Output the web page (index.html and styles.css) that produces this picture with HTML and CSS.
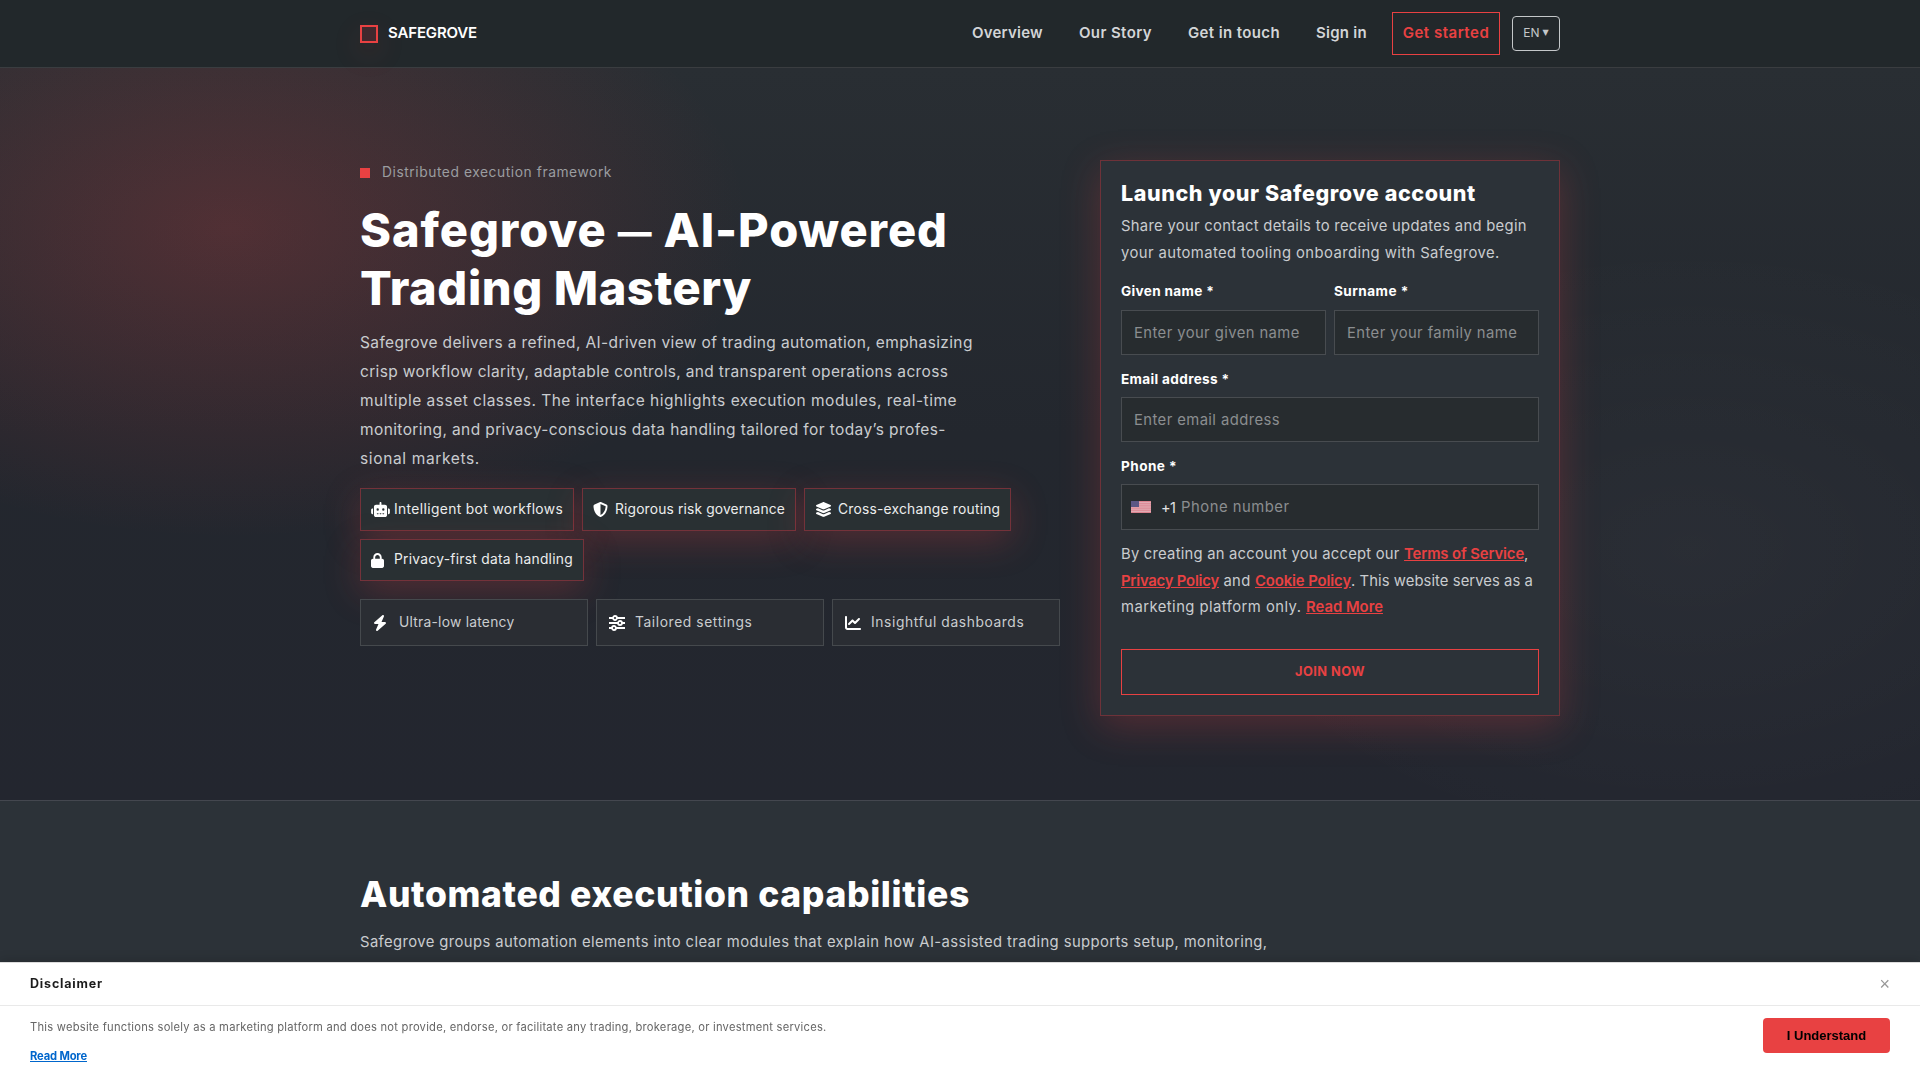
FILE: index.html
```
<!DOCTYPE html>
<html lang="en">
<head>
  <meta charset="UTF-8">
  <title>Safegrove</title>
  <link rel="stylesheet" href="styles.css">
</head>
<body>
  <header class="header">
    <div class="container header-inner">
      <a class="brand"><i class="brand-mark"></i><span class="t brand-name">SAFEGROVE</span></a>
      <nav class="nav">
        <a><span class="t n1">Overview</span></a>
        <a><span class="t n2">Our Story</span></a>
        <a><span class="t n3">Get in touch</span></a>
        <a><span class="t n4">Sign in</span></a>
        <a class="nav-cta"><span class="t n5">Get started</span></a>
        <button class="lang"><span>EN</span><span class="caret">▼</span></button>
      </nav>
    </div>
  </header>

  <!-- Hero -->
  <section class="hero">
    <div class="container hero-grid">
      <div class="hero-copy">
        <div class="eyebrow"><i></i><span class="t eb">Distributed execution framework</span></div>
        <h1><span class="t h1a">Safegrove <span class="dash">—</span> AI-Powered</span><span class="t h1b">Trading Mastery</span></h1>
        <p class="lead">
          <span class="t p1">Safegrove delivers a refined, AI-driven view of trading automation, emphasizing</span>
          <span class="t p2">crisp workflow clarity, adaptable controls, and transparent operations across</span>
          <span class="t p3">multiple asset classes. The interface highlights execution modules, real-time</span>
          <span class="t p4">monitoring, and privacy-conscious data handling tailored for today’s profes-</span>
          <span class="t p5">sional markets.</span>
        </p>
        <div class="chips">
          <div class="chip chip-bot">
            <svg viewBox="0 0 640 512" width="19" height="15"><path d="M320 0c17.700 0 32 14.300 32 32v64h120c39.800 0 72 32.200 72 72v272c0 39.800-32.200 72-72 72H168c-39.800 0-72-32.200-72-72V168c0-39.800 32.200-72 72-72h120V32c0-17.700 14.300-32 32-32zM208 384c-8.800 0-16 7.200-16 16s7.200 16 16 16h32c8.800 0 16-7.200 16-16s-7.200-16-16-16h-32zm96 0c-8.800 0-16 7.200-16 16s7.200 16 16 16h32c8.800 0 16-7.200 16-16s-7.200-16-16-16h-32zm96 0c-8.800 0-16 7.200-16 16s7.200 16 16 16h32c8.800 0 16-7.200 16-16s-7.200-16-16-16h-32zM264 256a40 40 0 1 0-80 0 40 40 0 1 0 80 0zm152 40a40 40 0 1 0 0-80 40 40 0 1 0 0 80zM48 224h16v192H48c-26.500 0-48-21.500-48-48v-96c0-26.500 21.500-48 48-48zm544 0c26.500 0 48 21.500 48 48v96c0 26.500-21.500 48-48 48h-16V224h16z"/></svg>
            <span class="t c1">Intelligent bot workflows</span>
          </div>
          <div class="chip">
            <svg viewBox="0 0 512 512" width="15" height="15"><path d="M256 0c4.600 0 9.200 1 13.400 2.900L457.700 82.800c22 9.300 38.400 31 38.300 57.200c-.5 99.200-41.300 280.700-213.600 363.200c-16.700 8-36.100 8-52.800 0C57.300 420.700 16.500 239.200 16 140c-.1-26.200 16.300-47.900 38.300-57.200L242.700 2.900C246.800 1 251.400 0 256 0zm0 66.800V444.800C394 378 431.100 230.100 432 141.400L256 66.800z"/></svg>
            <span class="t c2">Rigorous risk governance</span>
          </div>
          <div class="chip chip-layers">
            <svg viewBox="0 0 576 512" width="17" height="15"><path d="M264.500 5.200c14.900-6.900 32.100-6.900 47 0l218.600 101c8.500 3.900 13.900 12.400 13.900 21.800s-5.400 17.900-13.900 21.800l-218.600 101c-14.900 6.900-32.100 6.900-47 0L45.900 149.800C37.400 145.800 32 137.300 32 128s5.400-17.900 13.900-21.800L264.500 5.200zM476.900 209.600l53.200 24.600c8.500 3.900 13.900 12.400 13.900 21.800s-5.400 17.900-13.900 21.800l-218.600 101c-14.900 6.900-32.100 6.900-47 0L45.900 277.800C37.400 273.800 32 265.300 32 256s5.400-17.900 13.900-21.800l53.200-24.600 152 70.200c23.400 10.800 50.400 10.800 73.800 0l152-70.200zm-152 198.200l152-70.200 53.200 24.600c8.500 3.900 13.900 12.400 13.900 21.800s-5.400 17.900-13.900 21.800l-218.600 101c-14.900 6.900-32.100 6.900-47 0L45.900 405.800C37.400 401.800 32 393.300 32 384s5.400-17.900 13.900-21.800l53.200-24.600 152 70.200c23.400 10.800 50.400 10.800 73.800 0z"/></svg>
            <span class="t c3">Cross-exchange routing</span>
          </div>
          <div class="chip chip-lock">
            <svg viewBox="0 0 448 512" width="13" height="15"><path d="M144 144v48H304V144c0-44.200-35.800-80-80-80s-80 35.800-80 80zM80 192V144C80 64.500 144.500 0 224 0s144 64.500 144 144v48h16c35.300 0 64 28.700 64 64V448c0 35.300-28.700 64-64 64H64c-35.300 0-64-28.700-64-64V256c0-35.300 28.700-64 64-64H80z"/></svg>
            <span class="t c4">Privacy-first data handling</span>
          </div>
        </div>
        <div class="metrics">
          <div class="metric metric-bolt">
            <svg viewBox="0 0 448 512" width="14" height="16"><path d="M349.400 44.600c5.900-13.700 1.500-29.700-10.600-38.500s-28.600-8-39.900 1.800l-256 224c-10 8.800-13.600 22.900-8.900 35.300S50.700 288 64 288H175.500L98.600 467.400c-5.900 13.700-1.500 29.700 10.600 38.500s28.600 8 39.900-1.800l256-224c10-8.800 13.600-22.900 8.900-35.300s-16.600-20.700-30-20.700H272.500L349.400 44.600z"/></svg>
            <span class="t m1">Ultra-low latency</span>
          </div>
          <div class="metric">
            <svg viewBox="0 0 16 16" width="16" height="16"><path d="M0 3h3.500M8.500 3H16M0 8h8.500M13.500 8H16M0 13h2.500M7.500 13H16M8 3a2 2 0 1 1-4 0a2 2 0 1 1 4 0zM13 8a2 2 0 1 1-4 0a2 2 0 1 1 4 0zM7 13a2 2 0 1 1-4 0a2 2 0 1 1 4 0z" fill="none" stroke="#fff" stroke-width="1.800"/></svg>
            <span class="t m2">Tailored settings</span>
          </div>
          <div class="metric">
            <svg viewBox="0 0 512 512" width="16" height="16"><path d="M64 64c0-17.700-14.300-32-32-32S0 46.300 0 64V400c0 44.200 35.800 80 80 80H480c17.700 0 32-14.300 32-32s-14.300-32-32-32H80c-8.800 0-16-7.200-16-16V64zm406.600 86.600c12.500-12.500 12.500-32.800 0-45.300s-32.800-12.500-45.300 0L320 210.700l-57.400-57.400c-12.500-12.500-32.800-12.500-45.300 0l-112 112c-12.500 12.500-12.500 32.800 0 45.300s32.800 12.500 45.300 0L240 221.300l57.400 57.400c12.500 12.500 32.800 12.500 45.300 0l128-128z"/></svg>
            <span class="t m3">Insightful dashboards</span>
          </div>
        </div>
      </div>

      <!-- Signup form -->
      <form class="card">
        <h3><span class="t ch">Launch your Safegrove account</span></h3>
        <p class="card-text">
          <span class="t s1">Share your contact details to receive updates and begin</span>
          <span class="t s2">your automated tooling onboarding with Safegrove.</span>
        </p>
        <div class="fields">
          <div class="field"><label><span class="t l1">Given name *</span></label><div class="input"><span class="t ph">Enter your given name</span></div></div>
          <div class="field"><label><span class="t l2">Surname *</span></label><div class="input"><span class="t ph">Enter your family name</span></div></div>
        </div>
        <div class="field"><label><span class="t l1">Email address *</span></label><div class="input"><span class="t ph">Enter email address</span></div></div>
        <div class="field"><label><span class="t l2">Phone *</span></label>
          <div class="input phone">
            <svg class="flag" viewBox="0 0 20 12" width="20" height="12"><path fill="#dc7f8b" d="M0 0h20v12H0z"/><path stroke="#e3b5bd" stroke-width=".9" d="M0 1.400h20M0 3.200h20M0 5.100h20M0 6.900h20M0 8.800h20M0 10.600h20"/><path fill="#5b5784" d="M0 0h8v6H0z"/></svg>
            <span class="code">+1</span><span class="t ph-phone">Phone number</span>
          </div>
        </div>
        <p class="consent">
          <span class="line"><span class="t k1">By creating an account you accept our </span><a class="t k2">Terms of Service</a>,</span>
          <span class="line"><a class="t k3">Privacy Policy</a><span class="t k4"> and </span><a class="t k5">Cookie Policy</a><span class="t k6">. This website serves as a</span></span>
          <span class="line"><span class="t k7">marketing platform only. </span><a class="t k8">Read More</a></span>
        </p>
        <button type="button" class="join">JOIN NOW</button>
      </form>
    </div>
  </section>

  <section class="features">
    <div class="container">
      <h2>Automated execution capabilities</h2>
      <p class="features-text">Safegrove groups automation elements into clear modules that explain how AI-assisted trading supports setup, monitoring,</p>
    </div>
  </section>

  <!-- Disclaimer banner -->
  <div class="banner">
    <div class="banner-head"><span class="t banner-title">Disclaimer</span><span class="close">×</span></div>
    <div class="banner-body">
      <div>
        <p><span class="t banner-text">This website functions solely as a marketing platform and does not provide, endorse, or facilitate any trading, brokerage, or investment services.</span></p>
        <a class="t">Read More</a>
      </div>
      <button class="understand">I Understand</button>
    </div>
  </div>
</body>
</html>
```
FILE: styles.css
```
* { box-sizing: border-box; }
body {
  margin: 0;
  height: 1080px;
  overflow: hidden;
  font-family: Inter, sans-serif;
  background: #23272e;
  color: #c9cccf;
}
h1, h2, h3, p { margin: 0; }
h1, h2, h3 { color: #fff; font-weight: 800; }
svg { display: block; fill: #fff; flex: none; }
.t { display: inline-block; white-space: pre; }
.container { width: 1200px; margin: 0 auto; }

.header {
  height: 68px;
  background: #22282b;
  border-bottom: 1px solid #3a3d40;
}
.header-inner {
  display: flex;
  justify-content: space-between;
  align-items: center;
  height: 67px;
}
.brand { display: flex; align-items: center; gap: 10px; color: #fff; font-size: 15px; font-weight: 600; }
.brand-name { padding-bottom: 2px; letter-spacing: -.15px; }
.brand-mark {
  width: 18px;
  height: 18px;
  border: 2px solid #e84142;
  background: #40292e;
  box-shadow: 0 10px 30px rgba(232, 65, 66, .15);
}
.nav { display: flex; align-items: center; font-size: 15px; font-weight: 600; color: #d3d5d7; }
.nav a { margin-right: 36px; padding-bottom: 2px; }
.nav a:nth-child(4) { margin-right: 25px; }
.n1 { letter-spacing: .24px; }
.n2 { letter-spacing: .39px; }
.n3 { letter-spacing: .38px; }
.n4 { letter-spacing: .27px; }
.n5 { letter-spacing: .5px; }
.nav .nav-cta {
  margin-right: 12px;
  padding: 0;
  height: 43px;
  width: 108px;
  line-height: 39px;
  text-align: center;
  border: 1px solid #e84142;
  color: #e84142;
}
.lang {
  display: flex;
  align-items: center;
  justify-content: center;
  gap: 3px;
  width: 48px;
  height: 35px;
  padding: 0 0 2px;
  background: none;
  border: 1px solid #c4c7c9;
  border-radius: 4px;
  font: 12px Inter, sans-serif;
  color: #c4c7c9;
}
.caret { font: 8px "DejaVu Sans", sans-serif; }

.hero {
  height: 733px;
  border-bottom: 1px solid #44474f;
  background:
    radial-gradient(ellipse 520px 310px at 230px 160px, rgba(232, 65, 66, .22), rgba(232, 65, 66, 0)),
    radial-gradient(ellipse 500px 310px at 1690px 480px, rgba(255, 255, 255, .03), rgba(255, 255, 255, 0)),
    linear-gradient(#292e33, #23272e 50%, #23262f);
}
.hero-grid {
  display: grid;
  grid-template-columns: 700px 460px;
  gap: 40px;
  padding-top: 92px;
}
.eyebrow { display: flex; align-items: center; gap: 12px; height: 26px; font-size: 13.8px; color: #9b9da0; }
.eyebrow i { width: 10px; height: 10px; background: #e84142; }
.eb { padding-bottom: 2px; letter-spacing: .56px; }
h1 { margin-top: 15px; height: 115px; font-size: 47px; line-height: 57.6px; }
h1 .t { display: table; }
.h1a { letter-spacing: .9px; }
.h1b { letter-spacing: .58px; }
.dash { font-size: .72em; line-height: 0; vertical-align: .1em; }
.lead { margin-top: 12px; font-size: 15.5px; line-height: 29px; }
.lead .t, .card-text .t { display: table; }
.p1 { letter-spacing: .37px; }
.p2 { letter-spacing: .34px; }
.p3 { letter-spacing: .49px; }
.p4 { letter-spacing: .39px; }
.p5 { letter-spacing: .64px; }

.chips { display: flex; flex-wrap: wrap; gap: 8px; margin-top: 15px; }
.chip {
  display: flex;
  align-items: center;
  gap: 7px;
  height: 43px;
  padding: 0 10px;
  border: 1px solid #74323a;
  background: #293033;
  box-shadow: 0 10px 36px rgba(232, 65, 66, .25);
  color: #eceded;
  font-size: 13.8px;
}
.chip .t, .metric .t { padding-bottom: 2px; }
.chip-bot { gap: 4px; }
.chip-layers { gap: 6px; }
.chip-lock { height: 42px; gap: 10px; }
.c1 { letter-spacing: .37px; }
.c2 { letter-spacing: .15px; }
.c3 { letter-spacing: .22px; }
.c4 { letter-spacing: .27px; }
.metrics { display: grid; grid-template-columns: repeat(3, 1fr); gap: 8px; margin-top: 18px; }
.metric {
  position: relative;
  display: flex;
  align-items: center;
  gap: 10px;
  height: 47px;
  padding: 0 12px;
  border: 1px solid #45494d;
  background: #2a2d33;
  font-size: 13.8px;
}
.metric-bolt { gap: 12px; }
.m1 { letter-spacing: .25px; }
.m2, .m3 { letter-spacing: .6px; }

.card {
  height: 556px;
  padding: 20px;
  border: 1px solid #6e3239;
  background: #2c3238;
  box-shadow: 0 10px 36px rgba(232, 65, 66, .25);
}
h3 { font-size: 21.5px; line-height: 25px; letter-spacing: .59px; }
.card-text { margin-top: 7px; font-size: 14.8px; line-height: 27px; }
.s1 { letter-spacing: .29px; }
.s2 { letter-spacing: .42px; }
.fields { display: grid; grid-template-columns: 1fr 1fr; gap: 8px; }
.field label {
  display: block;
  padding-top: 12px;
  height: 42px;
  line-height: 24px;
  font-size: 13.6px;
  font-weight: 700;
  color: #fff;
}
.fields label { height: 43px; }
.l1 { letter-spacing: .33px; }
.l2 { letter-spacing: .45px; }
.input {
  display: flex;
  align-items: center;
  height: 45px;
  padding: 0 12px;
  border: 1px solid #484c50;
  background: #272c2f;
  font-size: 14.8px;
  color: #8b8e90;
}
.ph { letter-spacing: .42px; }
.ph-phone { letter-spacing: .52px; }
.phone { height: 46px; padding-left: 9px; }
.code { width: 30px; padding-left: 10px; font-size: 14.5px; color: #e2e3e4; letter-spacing: -.5px; }
.consent { margin-top: 11px; font-size: 14.8px; line-height: 26.5px; }
.line { display: block; white-space: nowrap; }
.consent a { color: #e84142; font-weight: 600; text-decoration: underline; }
.k1 { letter-spacing: .23px; }
.k2 { letter-spacing: -.09px; }
.k3 { letter-spacing: -.18px; }
.k4 { letter-spacing: .31px; }
.k5 { letter-spacing: -.07px; }
.k6 { letter-spacing: .07px; }
.k7 { letter-spacing: .46px; }
.k8 { letter-spacing: .02px; }
.join {
  display: block;
  width: 100%;
  height: 46px;
  margin-top: 28px;
  background: none;
  border: 1px solid #e84142;
  color: #e84142;
  font: 700 12.8px Inter, sans-serif;
  letter-spacing: .46px;
}

.features { height: 279px; padding-top: 72px; background: #2c3238; }
h2 { font-size: 35.5px; line-height: 44px; letter-spacing: .62px; }
.features-text { margin-top: 12px; font-size: 14.8px; line-height: 27px; letter-spacing: .41px; white-space: nowrap; }

.banner {
  position: fixed;
  left: 0;
  right: 0;
  bottom: 0;
  height: 118px;
  background: #fff;
  border-top: 1px solid #dcdcdc;
  box-shadow: 0 -2px 10px rgba(0, 0, 0, .15);
}
.banner-head {
  display: flex;
  align-items: center;
  justify-content: space-between;
  height: 43px;
  padding: 0 30px;
  border-bottom: 1px solid #e9e9e9;
  font-size: 12.5px;
  font-weight: 700;
  color: #1c1c1c;
}
.banner-title { padding-bottom: 2px; letter-spacing: .82px; }
.close { font: 18px "Liberation Sans", sans-serif; color: #999; }
.banner-body {
  display: flex;
  justify-content: space-between;
  align-items: flex-start;
  padding: 12px 30px;
  font-size: 11.2px;
  line-height: 18px;
  color: #666;
}
.banner-text { letter-spacing: .23px; }
.banner-body a { margin-top: 11px; color: #0066cc; font-weight: 700; text-decoration: underline; letter-spacing: -.16px; }
.understand {
  width: 127px;
  height: 35px;
  border: 0;
  border-radius: 4px;
  background: #e84142;
  color: #000;
  font: 700 13px "Liberation Sans", sans-serif;
}
```
